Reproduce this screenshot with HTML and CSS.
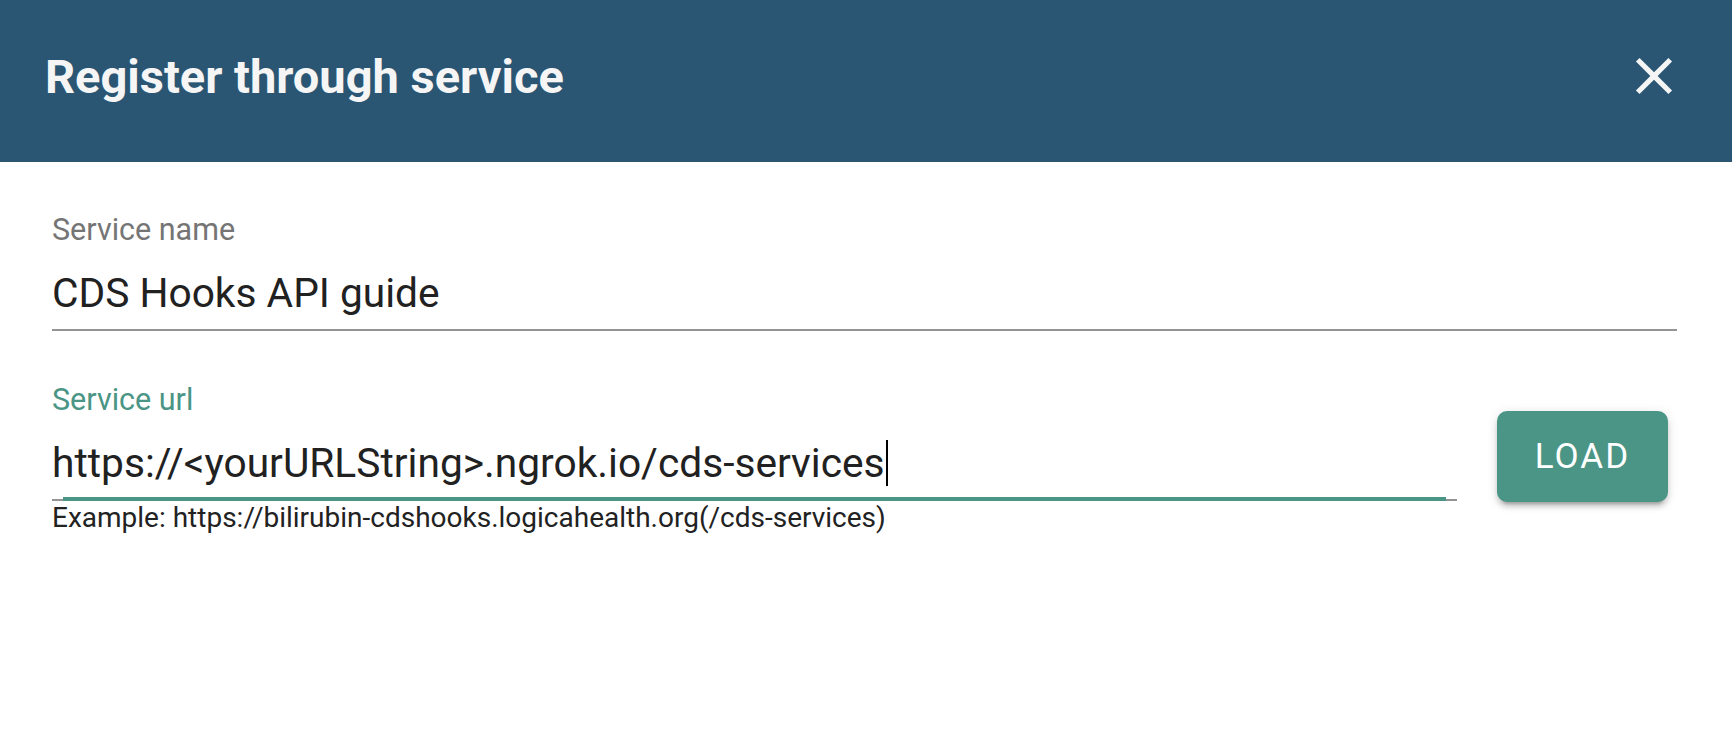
FILE: index.html
```html
<!DOCTYPE html>
<html lang="en">
<head>
<meta charset="utf-8">
<title>Register through service</title>
<link rel="stylesheet" href="styles.css">
</head>
<body>
<div class="dialog">
  <header class="dialog-header">
    <h2 class="dialog-title">Register through service</h2>
    <button class="close-btn" aria-label="Close">
      <svg viewBox="0 0 24 24" width="62" height="62"><path fill="currentColor" d="M19 6.41L17.59 5 12 10.59 6.41 5 5 6.41 10.59 12 5 17.59 6.41 19 12 13.41 17.59 19 19 17.59 13.41 12z"/></svg>
    </button>
  </header>
  <div class="dialog-content">
    <div class="field">
      <div class="field-label">Service name</div>
      <div class="field-input">CDS Hooks API guide</div>
    </div>
    <div class="url-row">
      <div class="field field-url">
        <div class="field-label label-focused">Service url</div>
        <div class="field-input input-focused">https://&lt;yourURLString&gt;.ngrok.io/cds-services<span class="caret"></span></div>
        <div class="helper">Example: https://bilirubin-cdshooks.logicahealth.org(/cds-services)</div>
      </div>
      <button class="load-btn">LOAD</button>
    </div>
  </div>
</div>
</body>
</html>
```
FILE: styles.css
```css
* { box-sizing: border-box; }
html, body { margin: 0; padding: 0; background: #fff; }
body { font-family: Roboto, "Noto Sans", "Liberation Sans", sans-serif; }

.dialog { width: 1732px; height: 735px; background: #fff; }

.dialog-header {
  height: 162px;
  background: #2a5674;
  display: flex;
  align-items: center;
  justify-content: space-between;
  padding: 0 47px 0 45px;
}
.dialog-title {
  margin: 0 0 8px 0;
  font-size: 47px;
  line-height: 54px;
  font-weight: 700;
  color: #f5f5f5;
}
.close-btn {
  border: 0;
  background: none;
  padding: 0;
  margin: 0 0 10px 0;
  width: 62px;
  height: 62px;
  color: #f5f5f5;
  display: flex;
}

.dialog-content { padding: 53px 55px 0 52px; }

.field { display: flex; flex-direction: column; }
.field-label {
  font-size: 30.5px;
  line-height: 30px;
  height: 30px;
  color: #757575;
  margin-bottom: 23px;
}
.label-focused { color: #4a9585; }
.field-input {
  position: relative;
  font-size: 40.7px;
  line-height: 50px;
  height: 63px;
  padding-bottom: 11px;
  color: #212121;
  border-bottom: 2px solid #949494;
  white-space: nowrap;
}
.input-focused::after {
  content: "";
  position: absolute;
  left: 11px;
  right: 11px;
  bottom: -2px;
  height: 4.5px;
  background: #4a9585;
}
.caret {
  display: inline-block;
  width: 2px;
  height: 46px;
  background: #000;
  vertical-align: -9px;
  margin-left: 1px;
}
.helper {
  margin-top: 2px;
  font-size: 28px;
  line-height: 30px;
  color: #222;
}

.url-row {
  display: flex;
  align-items: flex-start;
  gap: 40px;
  margin-top: 54px;
  padding-right: 9px;
}
.field-url { flex: 1; }
.load-btn {
  margin-top: 26px;
  width: 171px;
  height: 91px;
  border: 0;
  border-radius: 10px;
  background: #4a9585;
  color: #fff;
  font-family: Roboto, "Noto Sans", sans-serif;
  font-size: 35px;
  font-weight: 400;
  letter-spacing: 2px;
  box-shadow: 0 7px 3px -5px rgba(0,0,0,0.2), 0 5px 5px 0 rgba(0,0,0,0.14), 0 2px 12px 0 rgba(0,0,0,0.12);
}
```
